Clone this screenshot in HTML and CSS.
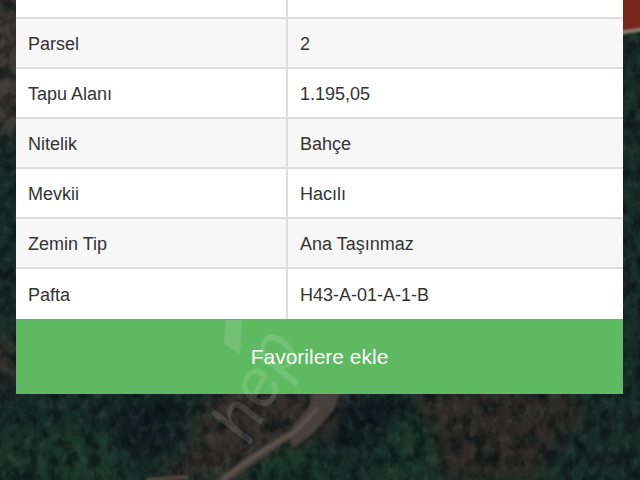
FILE: index.html
```html
<!DOCTYPE html>
<html lang="tr">
<head>
  <meta charset="UTF-8">
  <title>Parsel Bilgisi</title>
  <meta name="viewport" content="width=device-width, initial-scale=1.0">
  <link rel="stylesheet" href="styles.css">
</head>
<body>

  <!-- Uydu haritası -->
  <svg class="map" viewBox="0 0 640 480" preserveAspectRatio="xMidYMax slice" aria-hidden="true">
    <defs>
      <filter id="soft" x="-20%" y="-20%" width="140%" height="140%">
        <feGaussianBlur stdDeviation="8"/>
      </filter>
      <filter id="edge">
        <feGaussianBlur stdDeviation="1"/>
      </filter>
      <filter id="trees" x="0" y="0" width="100%" height="100%">
        <feTurbulence type="fractalNoise" baseFrequency="0.08 0.06" numOctaves="4" seed="8"/>
        <feColorMatrix values="0 0 0 0 0.02  0 0 0 0 0.05  0 0 0 0 0.06  3 0 0 0 -1.2"/>
      </filter>
      <filter id="leaves" x="0" y="0" width="100%" height="100%">
        <feTurbulence type="fractalNoise" baseFrequency="0.13 0.09" numOctaves="3" seed="3"/>
        <feColorMatrix values="0 0 0 0 0.3  0 0 0 0 0.38  0 0 0 0 0.34  0 2.4 0 0 -1.15"/>
      </filter>
    </defs>
    <rect width="640" height="480" fill="#182c26"/>
    <g filter="url(#soft)">
      <path fill="#3e3936" d="M-20 -20H30V125L-20 145z"/>
      <path fill="#342f2c" d="M-10 340H14V385H-10zM205 400L240 380L370 385L340 430L250 480H150L190 450z"/>
      <path fill="#2e2a28" d="M410 380H570L585 415L530 480H450z"/>
      <path fill="#0f1c22" d="M110 405L165 395L185 440L130 460zM340 400L400 390L390 430L330 455z"/>
      <path fill="#1a372b" d="M10 430H110L130 480H-10zM260 455L320 440L330 480H240zM390 430L430 420L440 480H380z"/>
    </g>
    <rect width="640" height="480" filter="url(#trees)" opacity="0.6"/>
    <rect width="640" height="480" filter="url(#leaves)" opacity="0.3"/>
    <g filter="url(#edge)">
      <path fill="#75261c" d="M620 -5H645V28L620 31z"/>
      <path fill="none" stroke="#8b7c70" stroke-width="4" d="M618 33L645 29"/>
      <path fill="#48403c" d="M214 482L245 458L290 430L308 408L314 390H340L334 410L310 436L292 448L290 438L262 458L228 482z"/>
      <path fill="none" stroke="#5a514b" stroke-width="4" d="M222 480L255 456L296 431L318 408"/>
      <path fill="none" stroke="#4f4640" stroke-width="4" d="M146 480L188 477"/>
    </g>
  </svg>

  <main class="card">
    <table class="info">
      <tr><th scope="row">Ada</th><td>212</td></tr>
      <tr><th scope="row">Parsel</th><td>2</td></tr>
      <tr><th scope="row">Tapu Alanı</th><td>1.195,05</td></tr>
      <tr><th scope="row">Nitelik</th><td>Bahçe</td></tr>
      <tr><th scope="row">Mevkii</th><td>Hacılı</td></tr>
      <tr><th scope="row">Zemin Tip</th><td>Ana Taşınmaz</td></tr>
      <tr><th scope="row">Pafta</th><td>H43-A-01-A-1-B</td></tr>
    </table>
    <button class="favorite" type="button">Favorilere ekle</button>
  </main>

  <!-- Filigran -->
  <svg class="watermark" viewBox="0 0 640 480" preserveAspectRatio="xMidYMax slice" aria-hidden="true">
    <path d="M226 320H242L240 354L224 344z"/>
    <text transform="translate(250 446) rotate(-63)">hep</text>
  </svg>

</body>
</html>
```

FILE: styles.css
```css
* {
  box-sizing: border-box;
}

body {
  margin: 0;
  height: 100vh;
  overflow: hidden;
  display: flex;
  align-items: flex-end;
  padding: 0 17px 86px 16px;
  background: #182c26;
  color: #333;
  font-family: "Liberation Sans", Arial, sans-serif;
  font-size: 18px;
  line-height: 24px;
}

.map,
.watermark {
  position: absolute;
  top: 0;
  left: 0;
  width: 100%;
  height: 100%;
}

.map filter {
  color-interpolation-filters: sRGB;
}

.card {
  position: relative;
  flex: 1;
  background: #fff;
}

.info {
  width: 100%;
  border-collapse: collapse;
  table-layout: fixed;
}

.info th,
.info td {
  height: 50px;
  padding: 2px 12px 0;
  border-top: 2px solid #ddd;
  font-weight: normal;
  text-align: left;
}

.info th {
  width: 271px;
  border-right: 2px solid #ddd;
}

.info tr:last-child th,
.info tr:last-child td {
  height: 51px;
}

.info tr:nth-child(even) {
  background: #f7f7f7;
}

.favorite {
  display: block;
  width: 100%;
  height: 75px;
  padding: 0;
  border: 0;
  background: #5fb962;
  color: #fff;
  font-family: inherit;
  font-size: 21px;
}

.watermark {
  pointer-events: none;
  fill: #fff;
  opacity: 0.12;
  font-size: 68px;
  font-style: italic;
}
```
